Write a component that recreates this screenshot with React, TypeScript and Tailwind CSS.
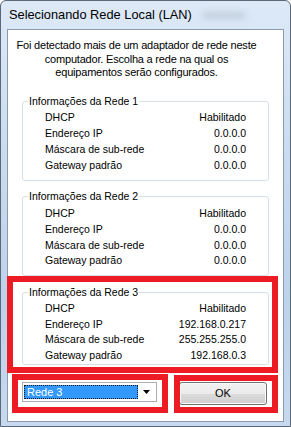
const font = { fontFamily: '"Liberation Sans", Arial, sans-serif' }

type Row = { label: string; value: string }

interface Network {
  title: string
  rows: Row[]
  className: string
}

const networks: Network[] = [
  {
    title: 'Informações da Rede 1',
    className: 'mt-[15px] pt-[3px] pb-[7px]',
    rows: [
      { label: 'DHCP', value: 'Habilitado' },
      { label: 'Endereço IP', value: '0.0.0.0' },
      { label: 'Máscara de sub-rede', value: '0.0.0.0' },
      { label: 'Gateway padrão', value: '0.0.0.0' },
    ],
  },
  {
    title: 'Informações da Rede 2',
    className: 'mt-[9px] pt-[3px] pb-[6px]',
    rows: [
      { label: 'DHCP', value: 'Habilitado' },
      { label: 'Endereço IP', value: '0.0.0.0' },
      { label: 'Máscara de sub-rede', value: '0.0.0.0' },
      { label: 'Gateway padrão', value: '0.0.0.0' },
    ],
  },
  {
    title: 'Informações da Rede 3',
    className: 'mt-[10px] pt-[2px] pb-0',
    rows: [
      { label: 'DHCP', value: 'Habilitado' },
      { label: 'Endereço IP', value: '192.168.0.217' },
      { label: 'Máscara de sub-rede', value: '255.255.255.0' },
      { label: 'Gateway padrão', value: '192.168.0.3' },
    ],
  },
]

function NetworkGroup({ network }: { network: Network }) {
  return (
    <fieldset
      className={`mx-[14px] rounded-[3px] border border-[#d5dfe5] px-0 ${network.className}`}
    >
      <legend className="ml-[5px] px-[1px] leading-[13px]">{network.title}</legend>
      <div className="px-[22px]">
        {network.rows.map((row) => (
          <div key={row.label} className="flex h-[15.7px] items-center justify-between">
            <span>{row.label}</span>
            <span>{row.value}</span>
          </div>
        ))}
      </div>
    </fieldset>
  )
}

export default function App() {
  return (
    <div
      className="relative flex h-[427px] w-[291px] flex-col overflow-hidden rounded-t-[6px] border border-[#5d6876] bg-[linear-gradient(to_bottom,#dde9f7,#cadcf1_35%,#bdd2eb_70%,#c6d9ef)] text-[10.5px] text-black"
      style={font}
    >
      {/* title bar */}
      <div className="flex h-[28px] shrink-0 items-center pl-[8px] text-[12.8px] text-black">
        <span>Selecionando Rede Local (LAN)</span>
        <div className="ml-[10px] h-[7px] w-[44px] rounded-full bg-[#c3cfdc] blur-[3px]" />
      </div>

      {/* client area */}
      <div className="mx-[6px] flex h-[393px] shrink-0 flex-col border border-[#8c9aac] bg-white">
        <p className="ml-[6px] w-[245px] whitespace-nowrap pt-[9px] text-center text-[11px] leading-[13.5px] tracking-[-0.2px]">
          Foi detectado mais de um adaptador de rede neste
          <br />
          computador. Escolha a rede na qual os
          <br />
          equipamentos serão configurados.
        </p>

        {networks.map((n) => (
          <NetworkGroup key={n.title} network={n} />
        ))}

        <div className="mt-[17px] flex items-start">
          {/* combo box */}
          <div className="ml-[14px] flex h-[20px] w-[135px] items-center border border-[#abadb3] bg-white p-[1px]">
            <div className="flex h-[14px] w-[114px] items-center border border-dotted border-[#0b1a33] bg-[#3399ff] pl-[2px] text-[11px] text-white">
              Rede 3
            </div>
            <div className="flex flex-1 items-center justify-center">
              <svg width="7" height="4" viewBox="0 0 7 4">
                <polygon points="0,0 7,0 3.5,4" fill="#000" />
              </svg>
            </div>
          </div>

          {/* ok button */}
          <button className="ml-[22px] flex h-[23px] w-[88px] items-center justify-center rounded-[3px] border border-[#707070] bg-[linear-gradient(to_bottom,#f2f2f2_0%,#ebebeb_50%,#dddddd_50%,#cfcfcf_100%)] text-[11px] shadow-[inset_0_0_0_1px_#fbfbfb]">
            OK
          </button>
        </div>
      </div>

      {/* red highlight annotations */}
      <div className="pointer-events-none absolute left-[6px] top-[275px] h-[97px] w-[271px] border-[6px] border-[#ed1c24]" />
      <div className="pointer-events-none absolute left-[11px] top-[373px] h-[39px] w-[156px] border-[6px] border-[#ed1c24]" />
      <div className="pointer-events-none absolute left-[173px] top-[374px] h-[38px] w-[104px] border-[6px] border-[#ed1c24]" />
    </div>
  )
}
